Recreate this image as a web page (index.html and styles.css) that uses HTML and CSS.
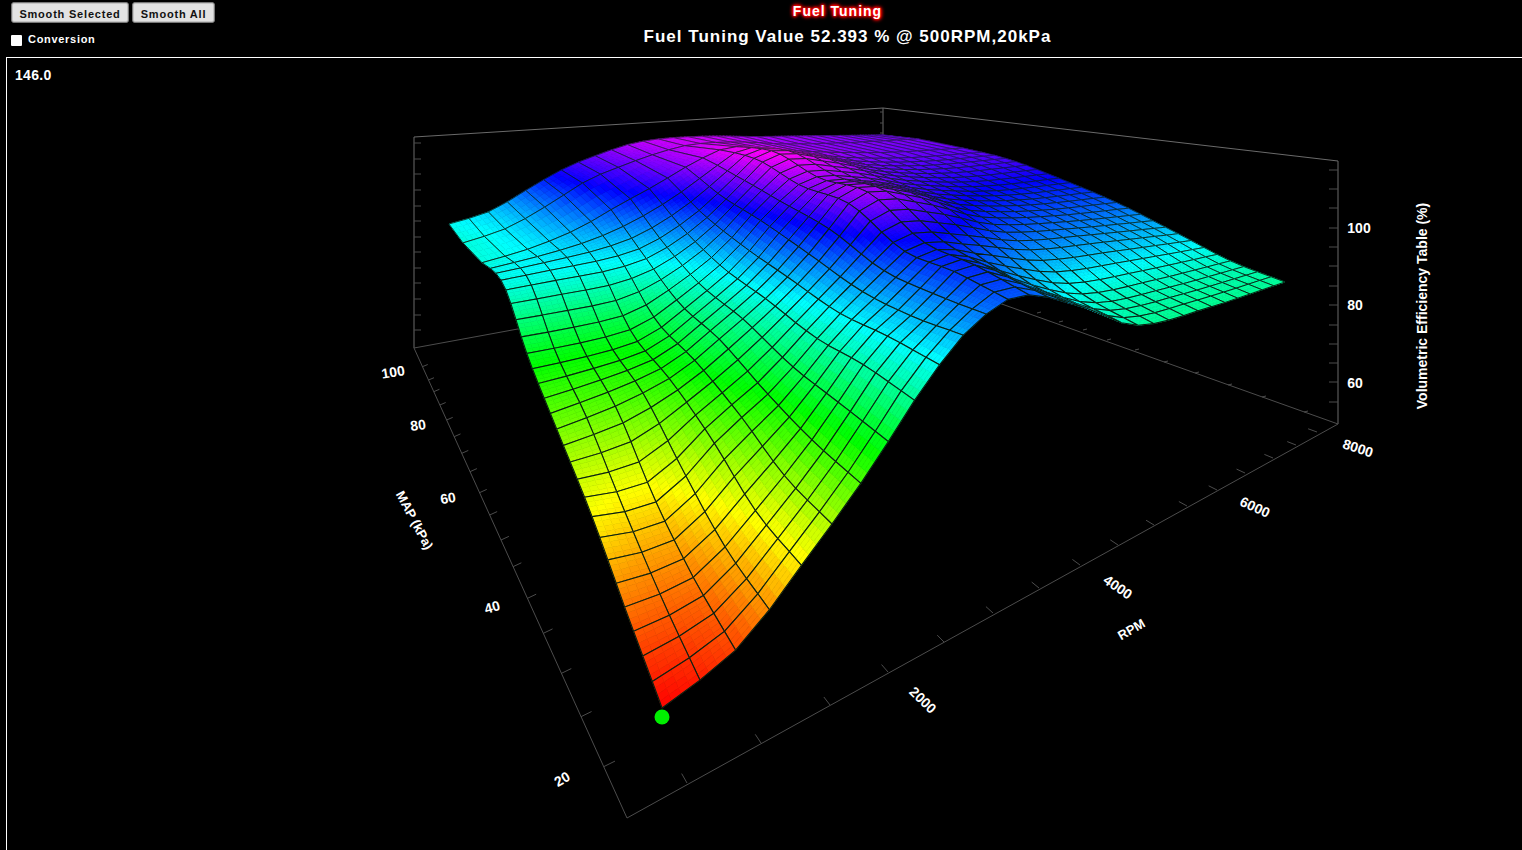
FILE: index.html
```html
<!doctype html>
<html lang="en">
<head>
  <meta charset="UTF-8">
  <title>Fuel Tuning</title>
  <link rel="stylesheet" href="styles.css">
</head>
<body>
  <div class="top">
    <div class="controls">
      <div class="btn-row">
        <button class="btn btn-selected">Smooth Selected</button>
        <button class="btn btn-all">Smooth All</button>
      </div>
      <label class="conversion"><input type="checkbox"> Conversion</label>
    </div>
    <div class="titles">
      <div class="map-name">Fuel Tuning</div>
      <div class="map-value">Fuel Tuning Value 52.393 % @ 500RPM,20kPa</div>
    </div>
  </div>

  <div class="panel">
    <div class="max-value">146.0</div>
    <svg id="chart" width="1515" height="792" viewBox="7 58 1515 792">
      <g id="axes" class="axis-lines">
        <path d="M414 348V137L883 108L1338 161V424M883 108V262"/>
        <path class="floor-line" d="M414 348L884 262L1338 424L627 818L414 348"/>
      </g>
      <g id="mesh"></g>
      <circle class="dot" cx="662" cy="717" r="7.5"/>
      <g class="axis-text">
        <text x="1359" y="233">100</text>
        <text x="1355" y="310">80</text>
        <text x="1355" y="388">60</text>
        <text transform="translate(1427 306) rotate(-90)" class="z-title">Volumetric Efficiency Table (%)</text>
        <text transform="translate(393 372) rotate(-9)" dy="5">100</text>
        <text transform="translate(418 425) rotate(-8)" dy="5">80</text>
        <text transform="translate(448 498) rotate(-10)" dy="5">60</text>
        <text transform="translate(492 607) rotate(-16)" dy="5">40</text>
        <text transform="translate(562 779) rotate(-30)" dy="5">20</text>
        <text transform="translate(415 520) rotate(62)" dy="5" class="axis-title">MAP (kPa)</text>
        <text transform="translate(923 700) rotate(44)" dy="5">2000</text>
        <text transform="translate(1118 587) rotate(35)" dy="5">4000</text>
        <text transform="translate(1255 507) rotate(25)" dy="5">6000</text>
        <text transform="translate(1358 448) rotate(18)" dy="5">8000</text>
        <text transform="translate(1131 629) rotate(-30)" dy="5" class="axis-title">RPM</text>
      </g>
    </svg>
  </div>

  <script src="script.js"></script>
</body>
</html>
```

FILE: styles.css
```css
html, body {
    margin: 0;
    height: 100%;
    overflow: hidden;
    background: #000;
}

body {
    color: #fff;
    font-family: "Liberation Sans", Arial, sans-serif;
    font-weight: bold;
    letter-spacing: 1px;
}

.top {
    display: flex;
    height: 57px;
}

.controls {
    width: 215px;
    padding: 2px 0 0 11px;
    box-sizing: border-box;
}

.btn-row {
    display: flex;
    gap: 3px;
}

.btn {
    height: 21px;
    padding: 2px 0 0;
    color: #111;
    background: #e2e2e2;
    border: 1px solid #777;
    border-radius: 3px;
    box-shadow: inset 0 0 0 1px #c4c4c4;
    font: inherit;
    font-size: 11px;
    letter-spacing: 0.8px;
}

.btn-selected {
    width: 118px;
}

.btn-all {
    width: 83px;
}

.conversion {
    display: flex;
    align-items: center;
    gap: 6px;
    margin-top: 9px;
    font-size: 11px;
    letter-spacing: 0.7px;
}

.conversion input {
    appearance: none;
    width: 11px;
    height: 11px;
    margin: 3px 0 0;
    background: #fff;
    border-radius: 1px;
}

.titles {
    width: 1265px;
    text-align: center;
}

.map-name {
    margin: 3px 20px 0 0;
    font-size: 14px;
    line-height: 17px;
    text-shadow: 0 0 2px #f00, 0 0 2px #f00, 0 0 3px #f00, 0 0 4px #f00, 0 0 4px #f00, 0 0 5px #f00;
}

.map-value {
    margin-top: 7px;
    font-size: 17px;
    line-height: 20px;
}

.panel {
    position: relative;
    height: 793px;
    margin-left: 6px;
    border: 1px solid #fff;
    border-right: none;
    border-bottom: none;
}

.max-value {
    position: absolute;
    left: 8px;
    top: 9px;
    font-size: 14px;
    letter-spacing: 0.3px;
}

#chart {
    display: block;
}

.axis-lines path,
.axis-lines line {
    fill: none;
    stroke: #6a6a6a;
    stroke-width: 1;
}

.axis-lines .floor-line,
.axis-lines line {
    stroke: #4c4c4c;
}

.axis-text text {
    fill: #fff;
    font-size: 14px;
    letter-spacing: 0;
    text-anchor: middle;
}

.axis-text .axis-title {
    font-size: 13px;
}

.dot {
    fill: #00ee00;
}
```

FILE: script.js
```js
// floor of the box: unit square (u = rpm, v = map) to screen, from its 4 corners
const floor = { a: 2151.8, b: 429.9, c: 627, d: 62.6, e: 70.4, f: 818, g: 1.0768, h: 1.553 };

// surface height, in screen px at w = 1
const uKnots = [0.0536, 0.12, 0.19, 0.25, 0.32, 0.38, 0.45, 0.55, 0.65, 0.8, 1];
const vKnots = [0.07, 0.15, 0.24, 0.35, 0.47, 0.6, 0.75, 0.87, 1];
const heights = [
  [0, 30, 110, 185, 285, 350, 380, 335, 275, 266, 269],
  [47, 52, 122, 195, 295, 345, 400, 345, 300, 290, 288],
  [103, 95, 165, 215, 295, 353, 410, 390, 360, 345, 327],
  [156, 170, 200, 250, 315, 385, 474, 455, 410, 385, 373],
  [215, 215, 225, 270, 335, 415, 480, 470, 440, 415, 410],
  [300, 305, 310, 325, 375, 440, 517, 500, 465, 445, 443],
  [296, 315, 350, 395, 440, 480, 510, 495, 480, 465, 458],
  [296, 320, 370, 420, 455, 480, 498, 495, 480, 470, 465],
  [307, 330, 385, 430, 465, 488, 497, 495, 485, 475, 461]
];

const SVG_NS = 'http://www.w3.org/2000/svg';

// cubic hermite through unevenly spaced knots
function curve(xs, ys, x) {
  let i = 0;
  while (i < xs.length - 2 && x > xs[i + 1]) i++;
  const slope = k => {
    const lo = Math.max(k - 1, 0);
    const hi = Math.min(k + 1, xs.length - 1);
    return (ys[hi] - ys[lo]) / (xs[hi] - xs[lo]);
  };
  const w = xs[i + 1] - xs[i];
  const t = (x - xs[i]) / w;
  const t2 = t * t;
  const t3 = t2 * t;
  return (2 * t3 - 3 * t2 + 1) * ys[i] + (t3 - 2 * t2 + t) * w * slope(i) +
    (-2 * t3 + 3 * t2) * ys[i + 1] + (t3 - t2) * w * slope(i + 1);
}

function heightAt(u, v) {
  const row = uKnots.map((_, col) => curve(vKnots, heights.map(r => r[col]), v));
  return curve(uKnots, row, u);
}

function project(u, v) {
  const w = floor.g * u + floor.h * v + 1;
  const height = heightAt(u, v);
  return {
    x: (floor.a * u + floor.b * v + floor.c) / w,
    y: (floor.d * u + floor.e * v + floor.f - height) / w,
    w: w,
    height: height
  };
}

// rows get wider toward the back, the last two are much wider
function rowLines() {
  const lines = [];
  const count = 23;
  let total = 0;
  for (let i = 0; i < count; i++) total += 0.0205 + 0.008 * i / (count - 1);
  let v = 0.0703;
  lines.push(v);
  for (let i = 0; i < count; i++) {
    v += (0.0205 + 0.008 * i / (count - 1)) * (0.61 - 0.0703) / total;
    lines.push(v);
  }
  return lines.concat([0.64, 0.675, 0.73, 0.874, 1]);
}

function columnLines() {
  const lines = [];
  for (let i = 0; i <= 30; i++) lines.push(0.0536 + i * (1 - 0.0536) / 30);
  return lines;
}

function mix(p, q, t) {
  return { x: p.x + (q.x - p.x) * t, y: p.y + (q.y - p.y) * t, height: p.height + (q.height - p.height) * t };
}

function corner(quad, s, t) {
  return mix(mix(quad[0], quad[1], s), mix(quad[3], quad[2], s), t);
}

function pointsOf(list) {
  return list.map(p => p.x.toFixed(1) + ',' + p.y.toFixed(1)).join(' ');
}

function addShape(parent, tag, attrs) {
  const el = document.createElementNS(SVG_NS, tag);
  Object.keys(attrs).forEach(k => el.setAttribute(k, attrs[k]));
  parent.appendChild(el);
}

function drawMesh() {
  const mesh = document.getElementById('mesh');
  const us = columnLines();
  const vs = rowLines();
  const grid = vs.map(v => us.map(u => project(u, v)));
  const cells = [];

  for (let j = 0; j < vs.length - 1; j++) {
    for (let i = 0; i < us.length - 1; i++) {
      const quad = [grid[j][i], grid[j][i + 1], grid[j + 1][i + 1], grid[j + 1][i]];
      cells.push({ quad: quad, depth: quad[0].w + quad[2].w });
    }
  }
  cells.sort((a, b) => b.depth - a.depth);

  const parts = 4;
  cells.forEach(cell => {
    for (let t = 0; t < parts; t++) {
      for (let s = 0; s < parts; s++) {
        const p = [
          corner(cell.quad, s / parts, t / parts),
          corner(cell.quad, (s + 1) / parts, t / parts),
          corner(cell.quad, (s + 1) / parts, (t + 1) / parts),
          corner(cell.quad, s / parts, (t + 1) / parts)
        ];
        const mid = (p[0].height + p[2].height) / 2;
        const hue = Math.max(0, Math.min(300, mid * 0.58));
        const colour = 'hsl(' + hue.toFixed(0) + ',100%,50%)';
        addShape(mesh, 'polygon', { points: pointsOf(p), fill: colour, stroke: colour, 'stroke-width': 0.6 });
      }
    }
    // thinner lines further back, or the far cells go dark
    const far = Math.min(1, Math.max(0, (cell.depth / 2 - 1.8) / 1.2));
    addShape(mesh, 'polygon', {
      points: pointsOf(cell.quad),
      fill: 'none',
      stroke: '#082012',
      'stroke-width': (1.1 - 0.55 * far).toFixed(2)
    });
  });
}

function tick(x1, y1, dx, dy) {
  addShape(document.getElementById('axes'), 'line', { x1: x1, y1: y1, x2: x1 + dx, y2: y1 + dy });
}

function drawTicks() {
  // walls
  [143, 159, 174, 190, 206, 221, 237, 252, 268, 283, 299, 315, 330].forEach(y => tick(414, y, 7, 0));
  [170, 189, 208, 228, 247, 266, 286, 305, 325, 344, 363, 382, 402].forEach(y => tick(1338, y, -9, 0));
  [112, 123, 133].forEach(y => tick(883, y, -3, 0));

  // map axis
  [80, 120, 155, 195, 240, 290, 340, 395, 458, 525, 600, 680, 775, 880, 1000, 1130, 1280].forEach(n => {
    const y = 340 + n / 3;
    const t = (y - 348) / 470;
    tick(414 + (y - 348) * 213 / 470, y, 5 + 7 * t, -2 - 4 * t);
  });

  // rpm axis
  [[687, 783], [761, 743], [830, 705], [888, 672], [944, 642], [993, 613], [1039, 588], [1080, 565],
    [1118, 545], [1154, 525], [1187, 506], [1217, 490], [1245, 473], [1273, 458], [1296, 445], [1317, 432]].forEach(p => {
    const t = (p[0] - 627) / 711;
    tick(p[0], p[1], -5 - 4 * t, -10 + 7 * t);
  });

  // right floor edge
  [[1304, 412], [1262, 397], [1228, 385], [1195, 373], [1164, 362], [1135, 350], [1107, 340], [1083, 330], [1059, 322], [1037, 313]].forEach(p => {
    tick(p[0], p[1], 4, -1);
  });
}

drawTicks();
drawMesh();
```
